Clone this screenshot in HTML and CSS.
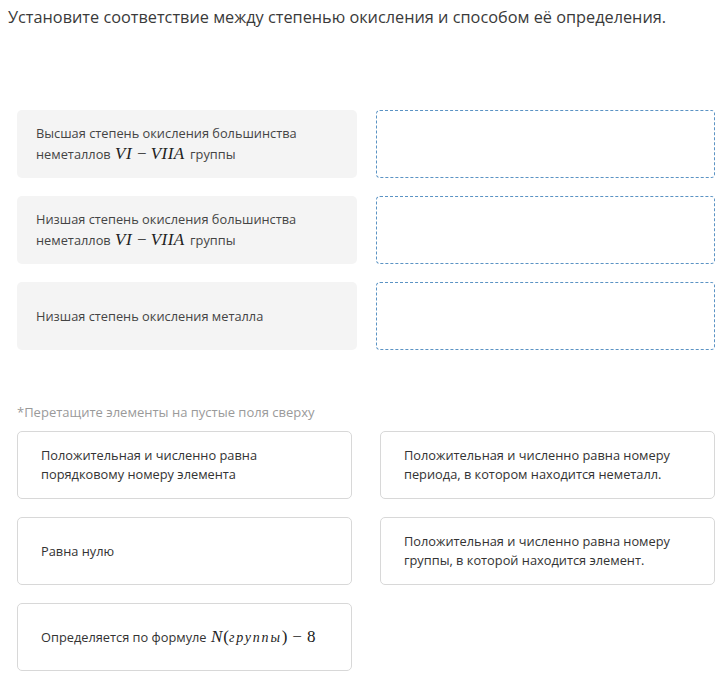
FILE: index.html
```html
<!DOCTYPE html>
<html lang="ru">
  <head>
    <meta charset="UTF-8" />
    <title>Соответствие</title>
    <link rel="stylesheet" href="styles.css">
  </head>
  <body>
    <div class="task">
      <p class="task-title">
        Установите соответствие между степенью окисления и способом её определения.
      </p>

      <div class="match-grid">
        <div class="match-item">
          <p><span>Высшая степень окисления большинства</span> <span>неметаллов</span> <span class="math"><i>VI</i><span class="op">−</span><i>VIIA</i></span> <span>группы</span></p>
        </div>
        <div class="drop-zone"></div>

        <div class="match-item">
          <p><span>Низшая степень окисления большинства</span> <span>неметаллов</span> <span class="math"><i>VI</i><span class="op">−</span><i>VIIA</i></span> <span>группы</span></p>
        </div>
        <div class="drop-zone"></div>

        <div class="match-item">
          <p>Низшая степень окисления металла</p>
        </div>
        <div class="drop-zone"></div>
      </div>

      <p class="hint">*Перетащите элементы на пустые поля сверху</p>

      <div class="options-grid">
        <div class="option">
          <p>Положительная и численно равна порядковому номеру элемента</p>
        </div>
        <div class="option">
          <p>Положительная и численно равна номеру периода, в котором находится неметалл.</p>
        </div>
        <div class="option">
          <p>Равна нулю</p>
        </div>
        <div class="option">
          <p>Положительная и численно равна номеру группы, в которой находится элемент.</p>
        </div>
        <div class="option">
          <p>Определяется по формуле <span class="math"><i class="tight">N</i>(<i class="word">группы</i>)<span class="op wide">−</span>8</span></p>
        </div>
      </div>
    </div>
  </body>
</html>
```

FILE: styles.css
```css
* {
  margin: 0;
  padding: 0;
  box-sizing: border-box;
}

body {
  font-family: "Open Sans", Arial, sans-serif;
  background-color: #fff;
  color: #333;
}

.task {
  padding: 6px 8px 0;
}

.task-title {
  font-size: 16.3px;
  line-height: 22px;
  color: #3a3a3a;
}

.match-grid {
  display: grid;
  grid-template-columns: 340px 339px;
  grid-auto-rows: 68px;
  column-gap: 19px;
  row-gap: 18px;
  margin: 82px 0 0 9px;
}

.match-item {
  background-color: #f4f4f4;
  border-radius: 5px;
  padding: 0 19px;
  display: flex;
  align-items: center;
  font-size: 12.8px;
  line-height: 21px;
  color: #444;
}

.drop-zone {
  border: 1px dashed #5b93c4;
  border-radius: 4px;
}

.math {
  display: inline-block;
  margin-left: 1px;
  font-family: "Liberation Serif", "Times New Roman", serif;
  font-size: 17px;
  line-height: 1;
  color: #222;
}

.math i {
  display: inline-block;
  padding-right: 2px;
  letter-spacing: 0.5px;
}

.math i.tight {
  padding-right: 1px;
  letter-spacing: 0;
}

.math i.word {
  padding-right: 0;
  font-size: 14px;
  letter-spacing: 1.8px;
}

.math .op {
  display: inline-block;
  margin: 0 4px 0 3px;
}

.math .op.wide {
  margin: 0 5px;
}

.hint {
  margin: 54px 0 0 9px;
  font-size: 13px;
  line-height: 16px;
  color: #9a9a9a;
}

.options-grid {
  display: grid;
  grid-template-columns: 335px 335px;
  grid-auto-rows: 68px;
  column-gap: 28px;
  row-gap: 18px;
  margin: 11px 0 0 9px;
}

.option {
  border: 1px solid #d8d8d8;
  border-radius: 5px;
  padding: 0 23px;
  display: flex;
  align-items: center;
  font-size: 12.8px;
  line-height: 19px;
  color: #333;
}
```
